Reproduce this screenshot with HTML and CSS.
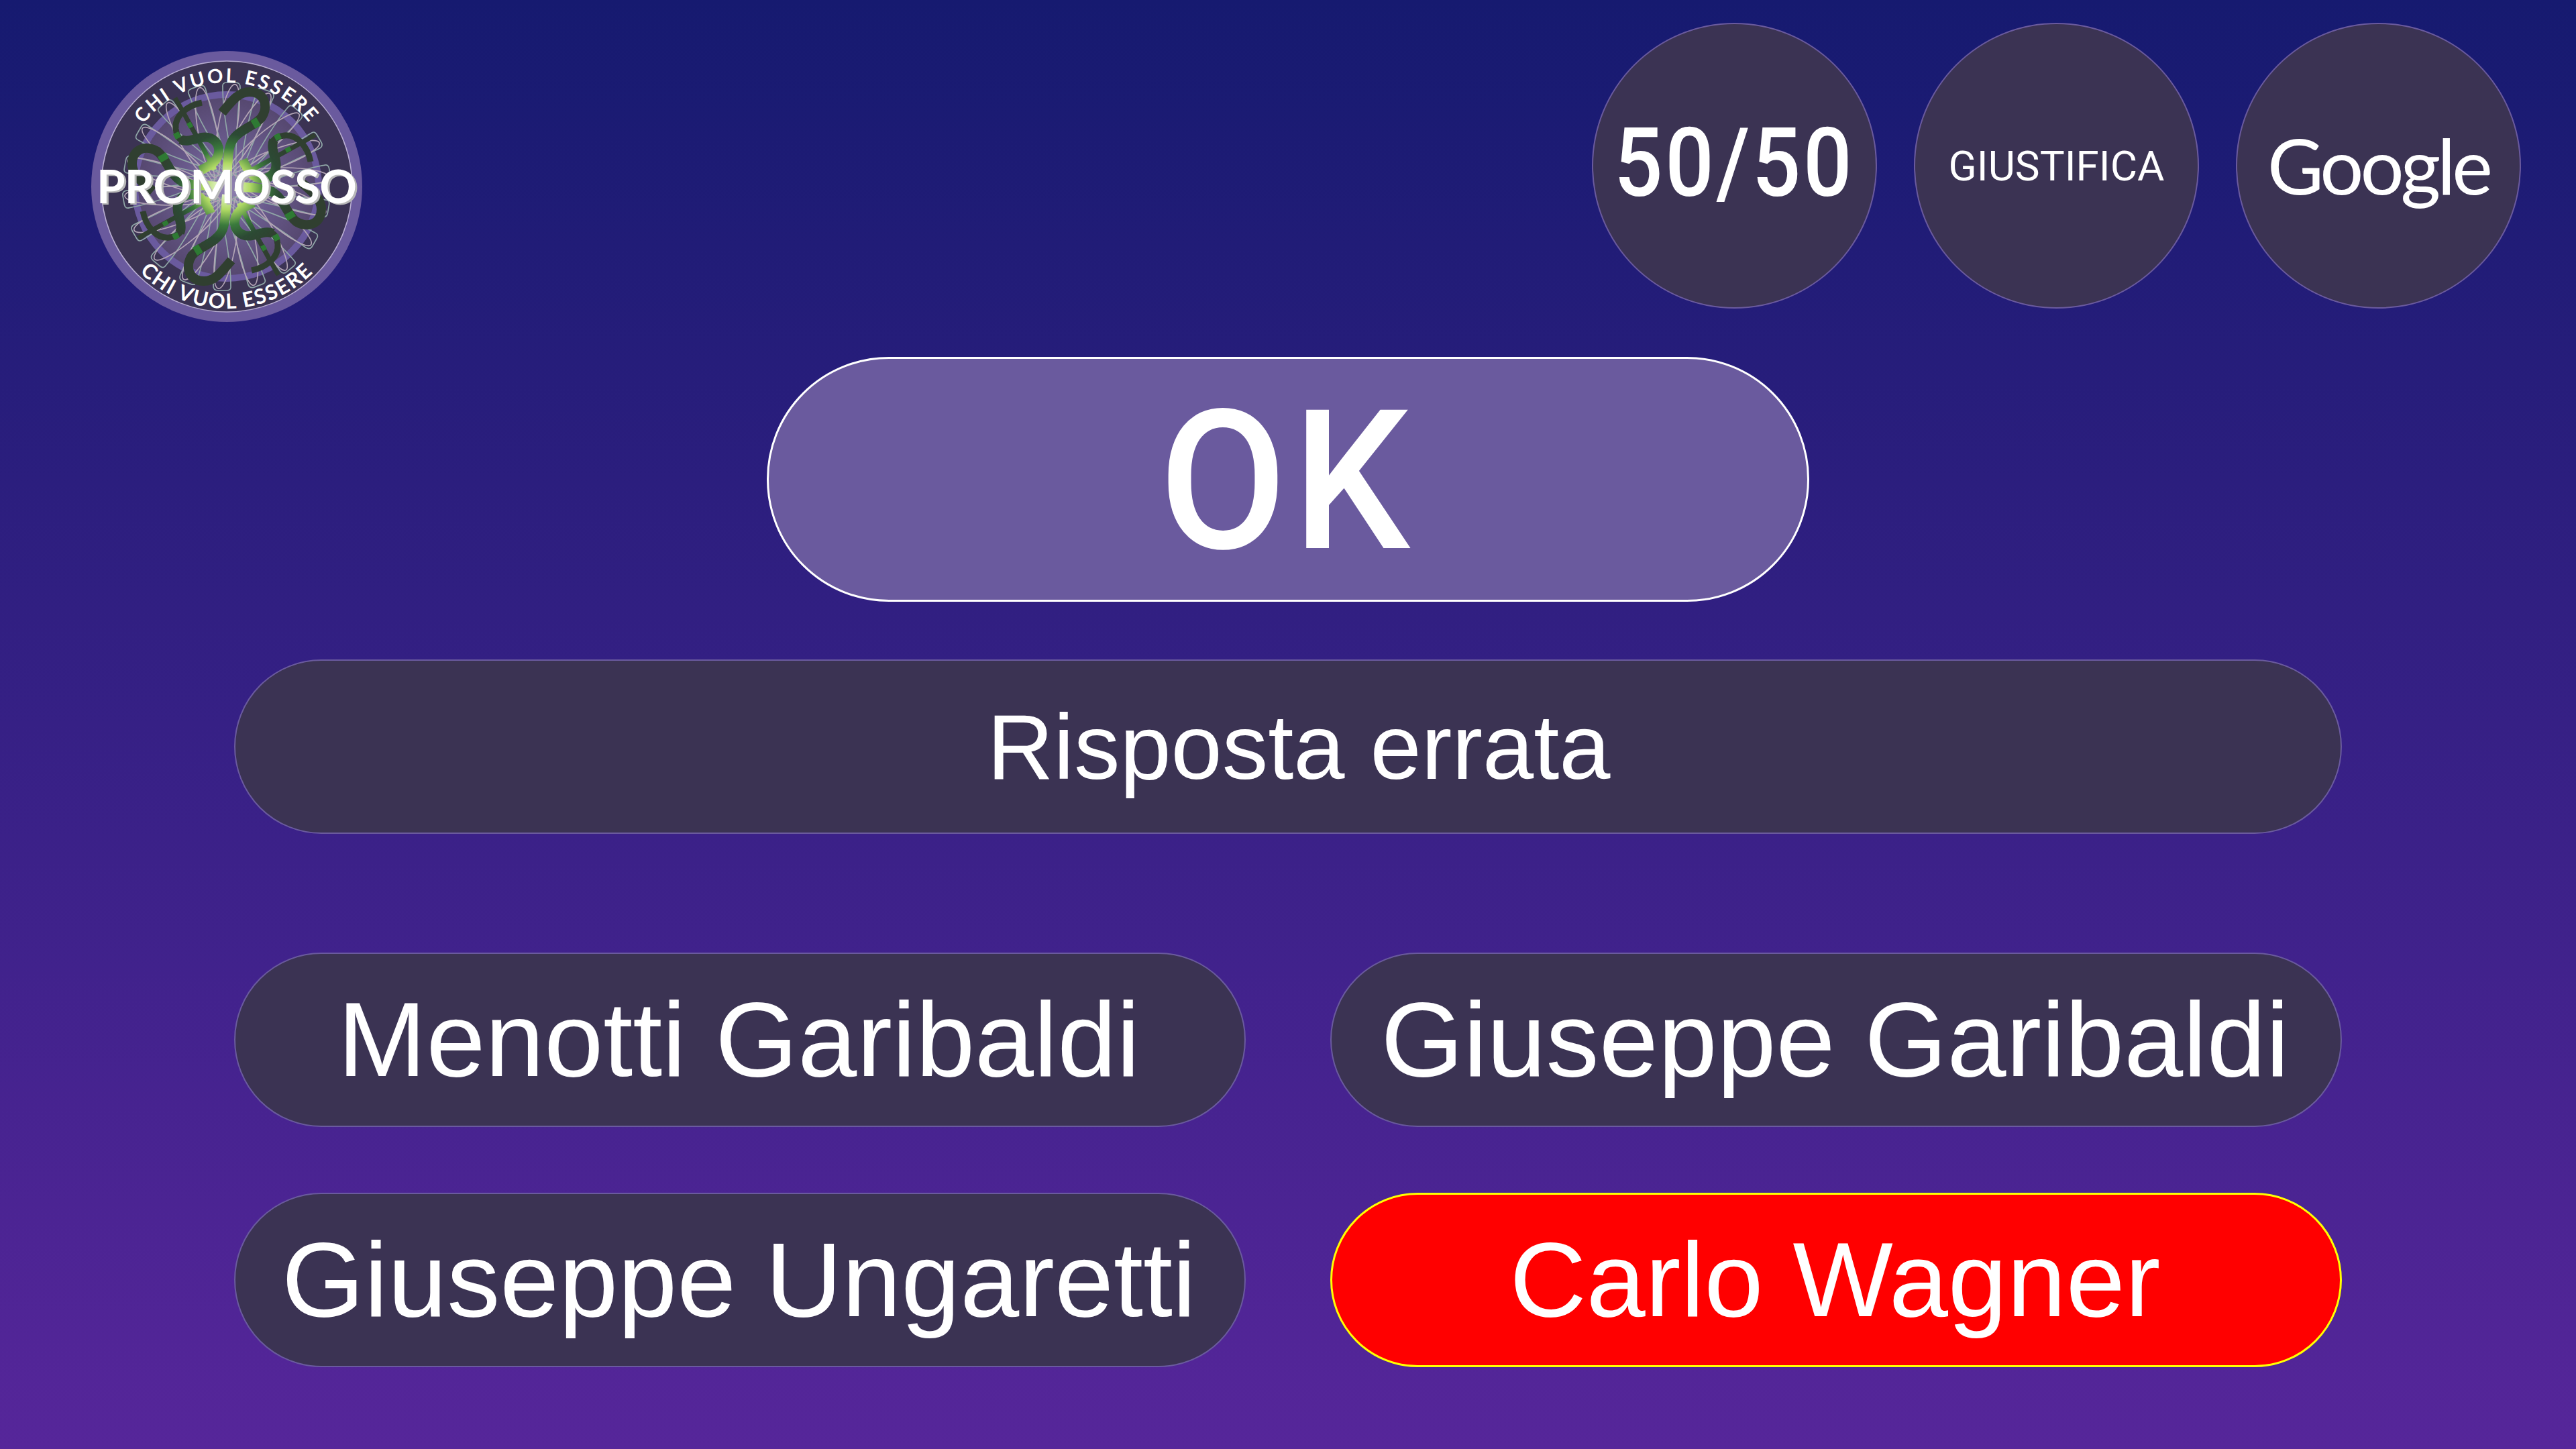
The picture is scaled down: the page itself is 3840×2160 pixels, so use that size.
FILE: index.html
```html
<!DOCTYPE html>
<html lang="it">
<head>
<meta charset="utf-8">
<title>Chi vuol essere promosso</title>
<link rel="stylesheet" href="styles.css">
</head>
<body>
<main class="game">
  <header class="top">
    <svg class="logo" viewBox="-202 -202 404 404" width="404" height="404" role="img" aria-label="Chi vuol essere promosso">
      <defs>
        <radialGradient id="disc" cx="0" cy="0" r="132" gradientUnits="userSpaceOnUse">
          <stop offset="0" stop-color="#9485b4"/>
          <stop offset="0.5" stop-color="#695a8c"/>
          <stop offset="1" stop-color="#564870"/>
        </radialGradient>
        <radialGradient id="glow" cx="0" cy="0" r="105" gradientUnits="userSpaceOnUse">
          <stop offset="0" stop-color="#ffffff"/>
          <stop offset="0.33" stop-color="#b0da64"/>
          <stop offset="0.55" stop-color="#3a7a3c"/>
          <stop offset="0.75" stop-color="#2c4a34"/>
          <stop offset="1" stop-color="#303f30"/>
        </radialGradient>
        <path id="pa" class="petal-teal" d="M14,-12 C12,-70 18,-120 20,-148 Q20,-155 13,-155 L0,-155 Q-7,-155 -6,-148 C-6,-110 4,-60 14,-12 Z"/>
        <ellipse id="pb" class="petal-mauve" cx="-14" cy="-84" rx="14" ry="68"/>
        <g id="arm">
          <path class="arm-bar" d="M-77,-132 C-62,-106 -38,-62 -18,-25"/>
          <path class="arm-thin" d="M-37,-125 C-58,-121 -78,-106 -76,-86 C-75,-78 -72,-72 -68,-69"/>
          <path class="arm-main" d="M-69,-70 C-60,-66 -50,-70 -38,-73 C-22,-76 -10,-65 -12,-50 C-14,-38 -25,-30 -40,-24"/>
          <path class="arm-main" d="M-7,-110 C8,-128 18,-141 34,-141 C56,-141 63,-120 52,-103 C42,-90 18,-85 8,-68 C1,-55 2,-35 0,-12"/>
          <path class="arm-band" d="M47.5,-97 L39,-92"/>
          <path class="arm-band-thin" d="M-76,-80 L-72,-72"/>
          <path class="arm-band-bar" d="M-57,-95 L-53,-88"/>
        </g>
        <path id="arcTop" d="M-155,0 A155,155 0 0 1 155,0"/>
        <path id="arcBottom" d="M-182,0 A182,182 0 0 0 182,0"/>
      </defs>
      <circle r="202" fill="#6a5a9e"/>
      <circle r="187" fill="#3b3353" stroke="#b9aed2" stroke-width="1.6"/>
      <circle r="137" fill="url(#disc)" stroke="#6a5a9e" stroke-width="10"/>
      <g>
        <use href="#pa"/><use href="#pb" transform="rotate(10)"/><use href="#pa" transform="rotate(20)"/><use href="#pb" transform="rotate(30)"/>
        <use href="#pa" transform="rotate(40)"/><use href="#pb" transform="rotate(50)"/><use href="#pa" transform="rotate(60)"/><use href="#pb" transform="rotate(70)"/>
        <use href="#pa" transform="rotate(80)"/><use href="#pb" transform="rotate(90)"/><use href="#pa" transform="rotate(100)"/><use href="#pb" transform="rotate(110)"/>
        <use href="#pa" transform="rotate(120)"/><use href="#pb" transform="rotate(130)"/><use href="#pa" transform="rotate(140)"/><use href="#pb" transform="rotate(150)"/>
        <use href="#pa" transform="rotate(160)"/><use href="#pb" transform="rotate(170)"/><use href="#pa" transform="rotate(180)"/><use href="#pb" transform="rotate(190)"/>
        <use href="#pa" transform="rotate(200)"/><use href="#pb" transform="rotate(210)"/><use href="#pa" transform="rotate(220)"/><use href="#pb" transform="rotate(230)"/>
        <use href="#pa" transform="rotate(240)"/><use href="#pb" transform="rotate(250)"/><use href="#pa" transform="rotate(260)"/><use href="#pb" transform="rotate(270)"/>
        <use href="#pa" transform="rotate(280)"/><use href="#pb" transform="rotate(290)"/><use href="#pa" transform="rotate(300)"/><use href="#pb" transform="rotate(310)"/>
        <use href="#pa" transform="rotate(320)"/><use href="#pb" transform="rotate(330)"/><use href="#pa" transform="rotate(340)"/><use href="#pb" transform="rotate(350)"/>
      </g>
      <use href="#arm"/>
      <use href="#arm" transform="rotate(90)"/>
      <use href="#arm" transform="rotate(180)"/>
      <use href="#arm" transform="rotate(270)"/>
      <text class="arc-text"><textPath href="#arcTop" startOffset="50%">CHI VUOL ESSERE</textPath></text>
      <text class="arc-text arc-low"><textPath href="#arcBottom" startOffset="50%">CHI VUOL ESSERE</textPath></text>
      <text class="logo-title" x="0" y="25" textLength="388" lengthAdjust="spacing">PROMOSSO</text>
    </svg>
    <nav class="lifelines">
      <button class="lifeline"><span class="t-fifty">50/50</span></button>
      <button class="lifeline"><span class="t-just">GIUSTIFICA</span></button>
      <button class="lifeline"><span class="t-google">Google</span></button>
    </nav>
  </header>
  <button class="ok"><span class="ok-label">OK</span></button>
  <section class="play">
    <div class="question"><span class="question-text">Risposta errata</span></div>
    <div class="answers">
      <button class="answer">Menotti Garibaldi</button>
      <button class="answer">Giuseppe Garibaldi</button>
      <button class="answer">Giuseppe Ungaretti</button>
      <button class="answer wrong">Carlo Wagner</button>
    </div>
  </section>
</main>
</body>
</html>
```

FILE: styles.css
```css
* { box-sizing: border-box; }
html, body { margin: 0; padding: 0; }
body {
  width: 3840px;
  height: 2160px;
  overflow: hidden;
  background: linear-gradient(180deg, #161a70 0%, #56269a 100%);
  color: #fff;
  font-family: "Liberation Sans", Arial, sans-serif;
}
button { font: inherit; color: inherit; padding: 0; margin: 0; cursor: pointer; }
.game { display: flex; flex-direction: column; align-items: center; width: 100%; height: 100%; }
.top {
  display: flex;
  justify-content: space-between;
  align-items: flex-start;
  width: 100%;
  padding: 34px 82px 0 136px;
}
.logo { display: block; margin-top: 42px; overflow: visible; }
.lifelines { display: flex; gap: 55px; }
.lifeline {
  display: flex;
  align-items: center;
  justify-content: center;
  width: 425px;
  height: 426px;
  border-radius: 50%;
  background: #3b3353;
  border: 2px solid #6a5a9e;
  font-family: Roboto, sans-serif;
}
.t-fifty {
  display: inline-block;
  font-size: 142px;
  font-weight: 500;
  letter-spacing: 4px;
  margin-bottom: 8px;
  transform: scaleX(0.9);
}
.t-just { font-size: 62px; font-weight: 400; }
.t-google { font-family: Lato, sans-serif; font-size: 115px; font-weight: 400; letter-spacing: -5px; margin-bottom: 4px; }
.ok {
  width: 1554px;
  height: 365px;
  margin-top: 52px;
  border-radius: 182px;
  background: #6a5a9e;
  border: 3px solid #fff;
  font-family: Roboto, sans-serif;
  font-size: 290px;
  font-weight: 500;
  line-height: 1;
  letter-spacing: 10px;
}
.ok-label { display: inline-block; margin-top: 6px; transform: scaleX(0.95); }
.play { display: flex; flex-direction: column; width: 3142px; margin-top: 86px; }
.question, .answer {
  display: flex;
  align-items: center;
  justify-content: center;
  height: 260px;
  border-radius: 130px;
  background: #3b3353;
  border: 2px solid #6a5a9e;
}
.question { font-size: 137px; }
.question-text { margin-left: 32px; }
.answers {
  display: grid;
  grid-template-columns: 1fr 1fr;
  column-gap: 126px;
  row-gap: 98px;
  margin-top: 177px;
}
.answer { font-size: 158.2px; padding-right: 3px; }
.answer.wrong { background: #ff0000; border: 3px solid #ffff00; }

.petal-teal { fill: none; stroke: #8fa6a6; stroke-width: 1.7; }
.petal-mauve { fill: none; stroke: #b3a5b5; stroke-width: 1.7; }
.arm-main { fill: none; stroke: url(#glow); stroke-width: 14; stroke-linecap: butt; }
.arm-thin { fill: none; stroke: url(#glow); stroke-width: 9; }
.arm-bar { fill: none; stroke: url(#glow); stroke-width: 7; }
.arm-band { fill: none; stroke: #2e7a33; stroke-width: 14; }
.arm-band-thin { fill: none; stroke: #2e7a33; stroke-width: 9; }
.arm-band-bar { fill: none; stroke: #2e7a33; stroke-width: 7; }
.arc-text {
  font-family: Lato, sans-serif;
  font-size: 29px;
  font-weight: 700;
  letter-spacing: 3px;
  fill: #fff;
  text-anchor: middle;
}
.arc-low { font-size: 31px; letter-spacing: 2px; }
.logo-title {
  font-family: Lato, sans-serif;
  font-size: 69px;
  font-weight: 700;
  fill: #fff;
  text-anchor: middle;
  filter: drop-shadow(3px 2px 0 #b8b8b8);
}
```
